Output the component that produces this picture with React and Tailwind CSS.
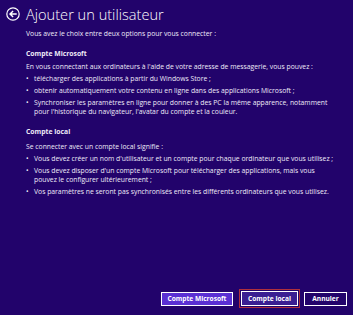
import React from 'react';

const BackIcon = () => (
  <svg width="14" height="14" viewBox="0 0 14 14" fill="none" className="shrink-0">
    <circle cx="7" cy="7" r="6.2" stroke="white" strokeWidth="1.2" />
    <path d="M10 7H4.2M6.6 4.4L4 7l2.6 2.6" stroke="white" strokeWidth="1.4" strokeLinecap="square" />
  </svg>
);

const Bullet = ({ children }) => (
  <li className="flex mt-[3px]">
    <span className="w-[8px] shrink-0">•</span>
    <span>{children}</span>
  </li>
);

const App = () => {
  return (
    <div
      className="w-[353px] h-[315px] bg-[#22036b] text-[#eeeaf8] flex flex-col overflow-hidden"
      style={{ fontFamily: '"Open Sans", "Noto Sans", sans-serif' }}
    >
      <div className="flex items-center gap-[6px] pl-[6px] pt-[6px]">
        <BackIcon />
        <h1 className="text-[14.6px] font-light leading-[16px] text-white">Ajouter un utilisateur</h1>
      </div>

      <div className="pl-[26px] pr-[8px] text-[6.8px] leading-[9px]">
        <p className="mt-[7px]">Vous avez le choix entre deux options pour vous connecter :</p>

        <h2 className="mt-[11px] font-bold">Compte Microsoft</h2>
        <p className="mt-[4px]">
          En vous connectant aux ordinateurs à l'aide de votre adresse de messagerie, vous pouvez :
        </p>
        <ul>
          <Bullet>télécharger des applications à partir du Windows Store ;</Bullet>
          <Bullet>obtenir automatiquement votre contenu en ligne dans des applications Microsoft ;</Bullet>
          <Bullet>
            Synchroniser les paramètres en ligne pour donner à des PC la même apparence, notamment
            <br />
            pour l'historique du navigateur, l'avatar du compte et la couleur.
          </Bullet>
        </ul>

        <h2 className="mt-[11px] font-bold">Compte local</h2>
        <p className="mt-[6px]">Se connecter avec un compte local signifie :</p>
        <ul>
          <Bullet>Vous devez créer un nom d'utilisateur et un compte pour chaque ordinateur que vous utilisez ;</Bullet>
          <Bullet>
            Vous devez disposer d'un compte Microsoft pour télécharger des applications, mais vous
            <br />
            pouvez le configurer ultérieurement ;
          </Bullet>
          <Bullet>Vos paramètres ne seront pas synchronisés entre les différents ordinateurs que vous utilisez.</Bullet>
        </ul>
      </div>

      <div className="mt-auto mb-[7px] flex justify-end items-center pr-[6px] text-[6.6px] font-bold text-white">
        <button className="h-[14px] w-[72px] bg-[#5a2fd3] border border-white">Compte Microsoft</button>
        <div className="ml-[6px] p-[1px] border border-[#b0303c]">
          <button className="h-[15px] w-[57px] bg-[#3a1f92] border border-white">Compte local</button>
        </div>
        <button className="ml-[4px] h-[14px] w-[43px] bg-[#22036b] border border-white">Annuler</button>
      </div>
    </div>
  );
};

export default App;
